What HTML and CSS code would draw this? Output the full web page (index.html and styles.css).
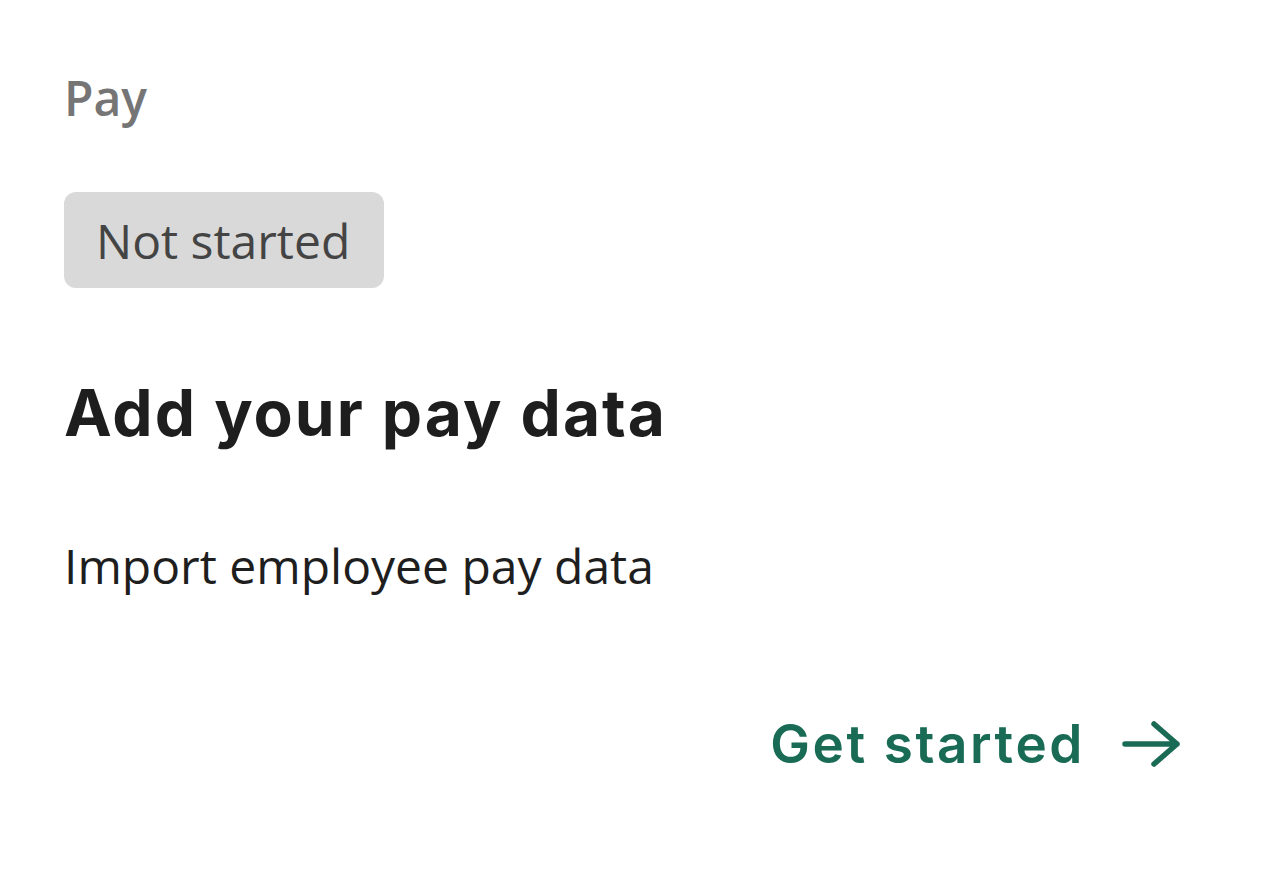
FILE: index.html
```html
<!DOCTYPE html>
<html lang="en">
<head>
<meta charset="utf-8">
<title>Pay</title>
<link rel="stylesheet" href="styles.css">
</head>
<body>
<main class="card">
  <div class="eyebrow">Pay</div>
  <div class="badge">Not started</div>
  <h2 class="title">Add your pay data</h2>
  <p class="desc">Import employee pay data</p>
  <div class="actions">
    <a class="cta" href="#"><span class="cta-label">Get started</span>
      <svg class="arrow" viewBox="0 0 58 48" width="58" height="48" aria-hidden="true">
        <path d="M3 24 H55 M32 4 L55 24 L32 44" fill="none" stroke="currentColor" stroke-width="5.5" stroke-linecap="round" stroke-linejoin="round"/>
      </svg>
    </a>
  </div>
</main>
</body>
</html>
```
FILE: styles.css
```css
html, body {
  margin: 0;
  padding: 0;
  background: #ffffff;
}
body {
  font-family: "Open Sans", "Noto Sans", sans-serif;
}
.card {
  padding: 66px 100px 0 64px;
  display: flex;
  flex-direction: column;
  align-items: flex-start;
}
.eyebrow {
  font-size: 48px;
  font-weight: 600;
  color: #757575;
  line-height: 64px;
}
.badge {
  margin-top: 62px;
  background: #d9d9d9;
  color: #444444;
  border-radius: 12px;
  font-size: 48px;
  line-height: 92px;
  padding: 3px 34px 1px 32px;
}
.title {
  margin: 87px 0 0 0;
  font-family: "Inter", "DejaVu Sans", sans-serif;
  font-weight: 700;
  font-size: 64px;
  line-height: 76px;
  color: #1e1e1e;
  letter-spacing: 2px;
}
.desc {
  margin: 83px 0 0 0;
  font-size: 48px;
  line-height: 64px;
  color: #1e1e1e;
}
.actions {
  align-self: stretch;
  display: flex;
  justify-content: flex-end;
  margin-top: 114px;
}
.cta {
  display: flex;
  align-items: center;
  gap: 37px;
  text-decoration: none;
  color: #1a6b55;
  font-family: "Inter", "DejaVu Sans", sans-serif;
  font-weight: 600;
  font-size: 53px;
  line-height: 64px;
  letter-spacing: 2.6px;
}
.arrow {
  display: block;
}
```
